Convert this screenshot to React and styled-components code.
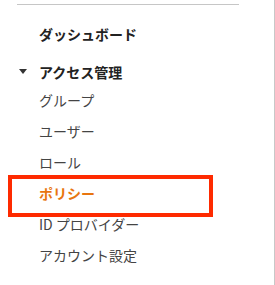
import React from "react";
import styled, { createGlobalStyle } from "styled-components";

const Global = createGlobalStyle`
  html, body { margin: 0; padding: 0; background: #fff; }
  body { font-family: "Noto Sans CJK JP", "Noto Sans", sans-serif; }
`;

const Panel = styled.nav`
  position: relative;
  width: 274px;
  height: 285px;
  border-right: 1px solid #c8c8c8;
  padding-top: 4px;
  box-sizing: content-box;
`;

const Divider = styled.div`
  margin-left: 17px;
  width: 222px;
  height: 1px;
  background: #c6c6c6;
`;

const Title = styled.div`
  margin-top: 14px;
  padding-left: 39px;
  height: 30px;
  line-height: 30px;
  font-size: 14px;
  font-weight: 700;
  color: #222;
`;

const Section = styled.div`
  margin-top: 9px;
  display: flex;
  align-items: center;
  height: 27px;
  padding-left: 19px;
  font-size: 14px;
  font-weight: 700;
  color: #222;
`;

const Caret = styled.span`
  width: 0;
  height: 0;
  border-left: 4px solid transparent;
  border-right: 4px solid transparent;
  border-top: 5px solid #333;
  margin-right: 12px;
`;

const List = styled.ul`
  list-style: none;
  margin: 0;
  padding: 0;
`;

const Item = styled.li`
  position: relative;
  height: 31px;
  line-height: 31px;
  padding-left: 39px;
  font-size: 14px;
  color: ${(p) => (p.$active ? "#e8750f" : "#444")};
  font-weight: ${(p) => (p.$active ? 700 : 400)};

  ${(p) =>
    p.$active &&
    `
    &::after {
      content: "";
      position: absolute;
      left: 8px;
      top: -3px;
      width: 205px;
      height: 42px;
      box-sizing: border-box;
      border: 4px solid #fe2a00;
    }
  `}
`;

const items = [
  "グループ",
  "ユーザー",
  "ロール",
  "ポリシー",
  "ID プロバイダー",
  "アカウント設定",
];

export default function App() {
  return (
    <>
      <Global />
      <Panel>
        <Divider />
        <Title>ダッシュボード</Title>
        <Section>
          <Caret />
          アクセス管理
        </Section>
        <List>
          {items.map((t) => (
            <Item key={t} $active={t === "ポリシー"}>
              {t}
            </Item>
          ))}
        </List>
      </Panel>
    </>
  );
}
